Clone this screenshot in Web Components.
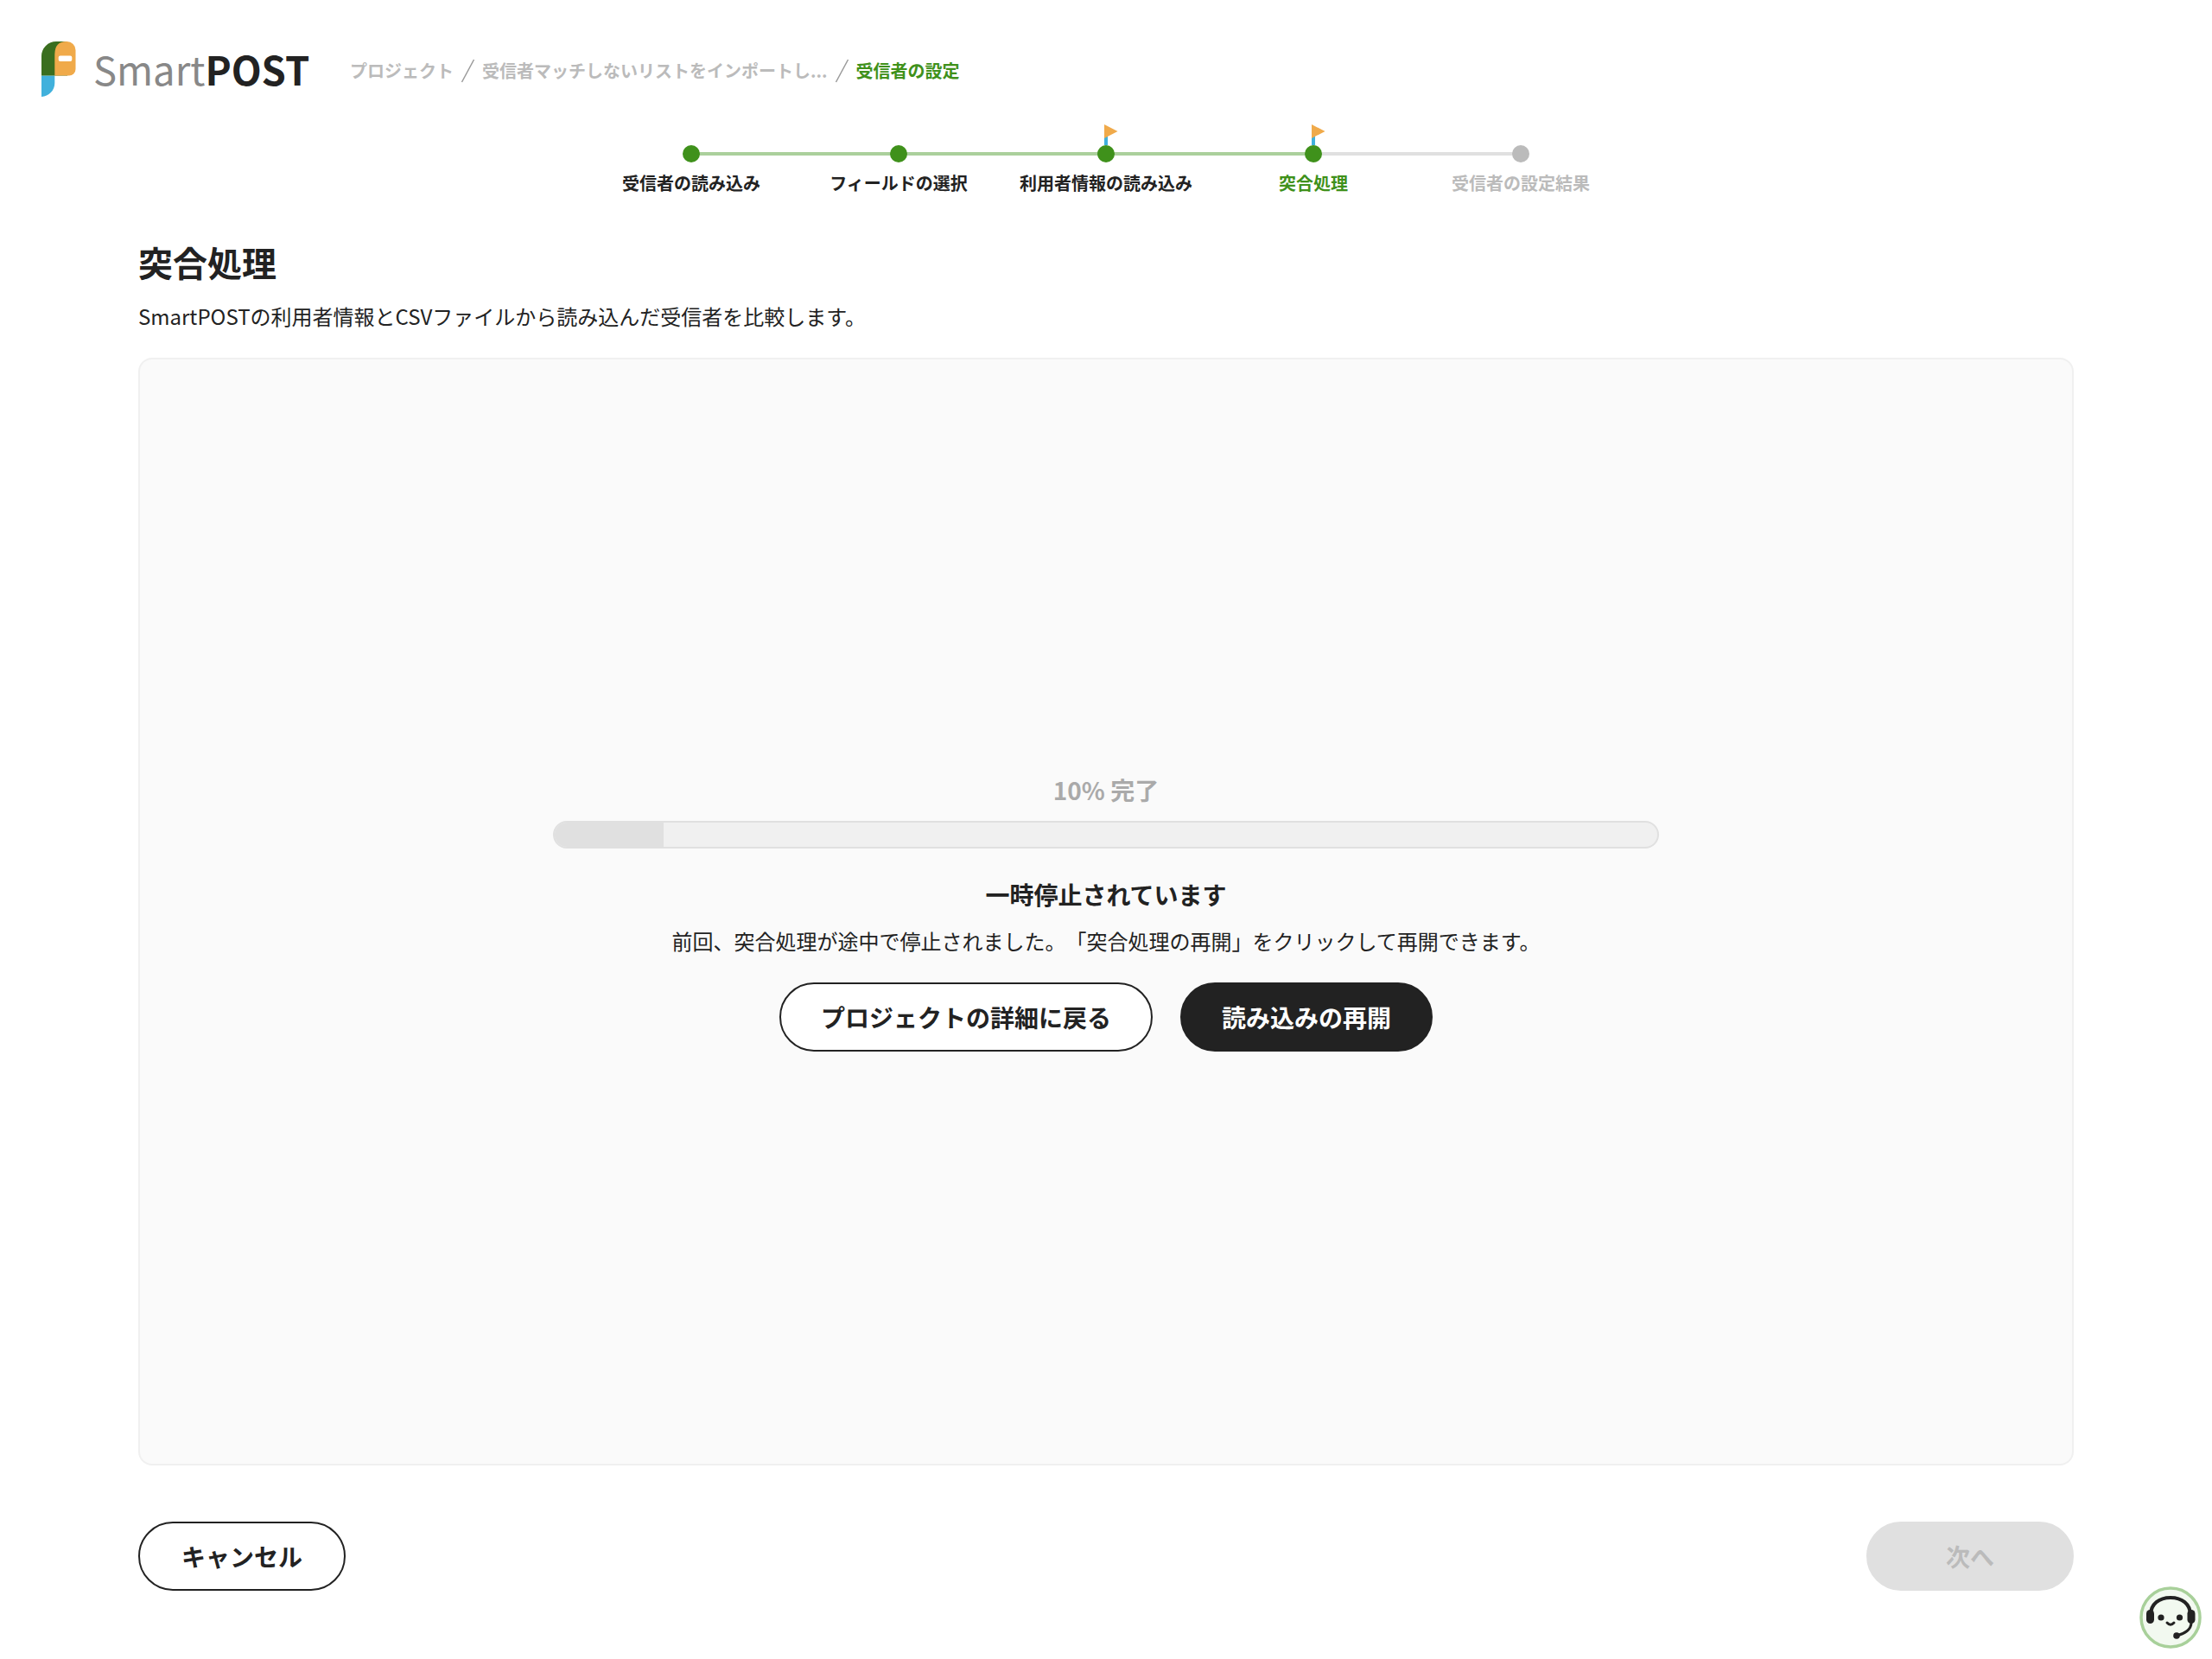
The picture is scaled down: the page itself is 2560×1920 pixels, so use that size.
<!DOCTYPE html>
<html lang="ja">
<head>
<meta charset="utf-8">
<title>SmartPOST</title>
<style>
  html, body { margin: 0; background: #fff; }
  body { font-family: "Noto Sans CJK JP", "Noto Sans", sans-serif; color: #222; text-spacing-trim: space-all; }
</style>
</head>
<body>
<app-page></app-page>

<script>
/**
 * SmartPOST import wizard, matching step
 */

class AppHeader extends HTMLElement {
    constructor() {
        super();
        this.attachShadow({ mode: 'open' });
        this.shadowRoot.innerHTML = `
            <style>
                :host { display: flex; align-items: center; height: 64px; padding: 48px 0 0 48px; }
                svg.logo { display: block; width: 40px; height: 64px; flex: none; }
                .brand { margin: -3px 0 0 20px; font-size: 45.4px; line-height: 64px; color: #888; width: 249px; white-space: nowrap; }
                .brand b { color: #222; font-weight: 700; }
                nav { display: flex; align-items: center; margin: 3px 0 0 48px; font-size: 20px; font-weight: 700; color: #bbb; white-space: nowrap; }
                .sep { display: block; width: 17px; height: 28px; margin: 0 8px; flex: none; }
                .now { color: #3f911b; }
            </style>
            <svg class="logo" viewBox="0 0 40 64">
                <path d="M0 39.5H15.3V48A16 16 0 0 1 0 64z" fill="#41b1dc"/>
                <path d="M0 17A17 17 0 0 1 17 0H30V39.5H0z" fill="#3a6e1f"/>
                <path d="M15.3 15Q15.3 0 29 0H29.5A10 10 0 0 1 39.5 10V32A7.5 7.5 0 0 1 32 39.5H15.3z" fill="#f0aa4a"/>
                <rect x="19.7" y="16.6" width="15.6" height="6.4" rx="2" fill="#fff"/>
            </svg>
            <div class="brand">Smart<b>POST</b></div>
            <nav>
                <span>プロジェクト</span>
                <svg class="sep" viewBox="0 0 17 28"><path d="M15.5 1L1.5 27" stroke="#999" stroke-width="1.5" fill="none"/></svg>
                <span>受信者マッチしないリストをインポートし...</span>
                <svg class="sep" viewBox="0 0 17 28"><path d="M15.5 1L1.5 27" stroke="#999" stroke-width="1.5" fill="none"/></svg>
                <span class="now">受信者の設定</span>
            </nav>
        `;
    }
}

class WizardStep extends HTMLElement {
    constructor() {
        super();
        this.attachShadow({ mode: 'open' });
    }

    connectedCallback() {
        const flag = this.hasAttribute('flag') ? `
            <svg class="flag" viewBox="0 0 16 24">
                <rect x="0" y="14" width="4" height="10" fill="#41b1dc"/>
                <path d="M0 0L15.5 8L0 16z" fill="#f0aa4a"/>
            </svg>` : '';
        this.shadowRoot.innerHTML = `
            <style>
                :host { display: flex; flex-direction: column; align-items: center; width: 240px; position: relative; font-size: 20px; font-weight: 700; color: #222; }
                :host([state="current"]) { color: #3f911b; }
                :host([state="todo"]) { color: #bbb; }
                .track { height: 20px; width: 100%; display: flex; align-items: center; justify-content: center; position: relative; }
                .track::before, .track::after { content: ""; position: absolute; top: 8px; height: 4px; width: 50%; }
                .track::before { left: 0; background: var(--left, transparent); }
                .track::after { right: 0; background: var(--right, transparent); }
                .dot { position: relative; z-index: 1; width: 20px; height: 20px; border-radius: 50%; background: #3f911b; }
                :host([state="todo"]) .dot { background: #bbb; }
                .flag { position: absolute; z-index: 1; left: 118px; bottom: 20px; width: 16px; height: 24px; }
                .label { margin-top: 9px; line-height: 30px; white-space: nowrap; }
            </style>
            <div class="track">${flag}<span class="dot"></span></div>
            <div class="label"><slot></slot></div>
        `;
    }
}

class WizardSteps extends HTMLElement {
    constructor() {
        super();
        this.attachShadow({ mode: 'open' });
        this.shadowRoot.innerHTML = `
            <style>
                :host { display: flex; justify-content: center; margin-top: 56px; }
            </style>
            <slot></slot>
        `;
    }
}

class PillButton extends HTMLElement {
    constructor() {
        super();
        this.attachShadow({ mode: 'open' });
        this.shadowRoot.innerHTML = `
            <style>
                :host { display: inline-flex; align-items: center; justify-content: center; box-sizing: border-box; height: 80px; padding: 0 46px; border-radius: 40px; border: 2px solid #222; background: #fff; color: #222; font-size: 28px; font-weight: 700; white-space: nowrap; }
                :host([variant="dark"]) { background: #222; color: #fff; }
                :host([variant="disabled"]) { background: #e0e0e0; border-color: #e0e0e0; color: #bbb; }
            </style>
            <slot></slot>
        `;
    }
}

class ProgressPanel extends HTMLElement {
    constructor() {
        super();
        this.attachShadow({ mode: 'open' });
        this.shadowRoot.innerHTML = `
            <style>
                :host { display: flex; flex-direction: column; align-items: center; justify-content: center; box-sizing: border-box; height: 1282px; border: 2px solid #f0f0f0; border-radius: 16px; background: #fafafa; }
                .percent { font-size: 28px; font-weight: 700; line-height: 40px; color: #aaa; }
                .bar { box-sizing: border-box; width: 1280px; height: 32px; margin-top: 16px; border: 2px solid #e0e0e0; border-radius: 16px; background: #f0f0f0; overflow: hidden; }
                .fill { width: 126px; height: 100%; background: #e0e0e0; }
                h2 { margin: 33px 0 0; font-size: 28px; font-weight: 700; line-height: 40px; color: #222; }
                p { margin: 14px 0 0; font-size: 24px; line-height: 40px; color: #222; }
                .actions { display: flex; gap: 32px; margin-top: 28px; }
            </style>
            <div class="percent">10% 完了</div>
            <div class="bar"><div class="fill"></div></div>
            <h2>一時停止されています</h2>
            <p>前回、突合処理が途中で停止されました。「突合処理の再開」をクリックして再開できます。</p>
            <div class="actions">
                <pill-button>プロジェクトの詳細に戻る</pill-button>
                <pill-button variant="dark">読み込みの再開</pill-button>
            </div>
        `;
    }
}

class SupportBadge extends HTMLElement {
    constructor() {
        super();
        this.attachShadow({ mode: 'open' });
        this.shadowRoot.innerHTML = `
            <style>
                :host { position: absolute; left: 2476px; top: 1836px; width: 72px; height: 72px; }
                svg { display: block; width: 72px; height: 72px; }
            </style>
            <svg viewBox="0 0 72 72">
                <circle cx="36" cy="36" r="34" fill="#f2f9f0" stroke="#a8d09a" stroke-width="3.5"/>
                <path d="M13 33C13 20 23 13 36 13S59 20 59 33" fill="none" stroke="#222" stroke-width="4"/>
                <rect x="8" y="27" width="9" height="16" rx="4.5" fill="#222"/>
                <rect x="55.5" y="27" width="9" height="16" rx="4.5" fill="#222"/>
                <path d="M60 42C60 50 52 55 43 57" fill="none" stroke="#222" stroke-width="3"/>
                <circle cx="43" cy="57" r="3.8" fill="#222"/>
                <circle cx="25" cy="36" r="3.6" fill="#222"/>
                <circle cx="46.5" cy="36" r="3.6" fill="#222"/>
                <path d="M32 42Q36 46.5 40 42" fill="none" stroke="#222" stroke-width="3" stroke-linecap="round"/>
            </svg>
        `;
    }
}

class AppPage extends HTMLElement {
    constructor() {
        super();
        this.attachShadow({ mode: 'open' });
        this.shadowRoot.innerHTML = `
            <style>
                :host { display: block; position: relative; height: 1920px; overflow: hidden; }
                main { padding: 0 160px; }
                h1 { margin: 46px 0 0; font-size: 40px; font-weight: 700; line-height: 60px; color: #222; }
                .lead { margin: 13px 0 0; font-size: 24px; line-height: 40px; color: #222; }
                progress-panel { margin-top: 28px; }
                footer { display: flex; justify-content: space-between; margin-top: 65px; }
                .wide { width: 240px; padding: 0; }
            </style>
            <app-header></app-header>
            <wizard-steps>
                <wizard-step state="done" style="--right:#abd09c">受信者の読み込み</wizard-step>
                <wizard-step state="done" style="--left:#abd09c;--right:#abd09c">フィールドの選択</wizard-step>
                <wizard-step state="done" flag style="--left:#abd09c;--right:#abd09c">利用者情報の読み込み</wizard-step>
                <wizard-step state="current" flag style="--left:#abd09c;--right:#e0e0e0">突合処理</wizard-step>
                <wizard-step state="todo" style="--left:#e0e0e0">受信者の設定結果</wizard-step>
            </wizard-steps>
            <main>
                <h1>突合処理</h1>
                <p class="lead">SmartPOSTの利用者情報とCSVファイルから読み込んだ受信者を比較します。</p>
                <progress-panel></progress-panel>
                <footer>
                    <pill-button class="wide">キャンセル</pill-button>
                    <pill-button class="wide" variant="disabled">次へ</pill-button>
                </footer>
            </main>
            <support-badge></support-badge>
        `;
    }
}

customElements.define('app-header', AppHeader);
customElements.define('wizard-step', WizardStep);
customElements.define('wizard-steps', WizardSteps);
customElements.define('pill-button', PillButton);
customElements.define('progress-panel', ProgressPanel);
customElements.define('support-badge', SupportBadge);
customElements.define('app-page', AppPage);
</script>
</body>
</html>
